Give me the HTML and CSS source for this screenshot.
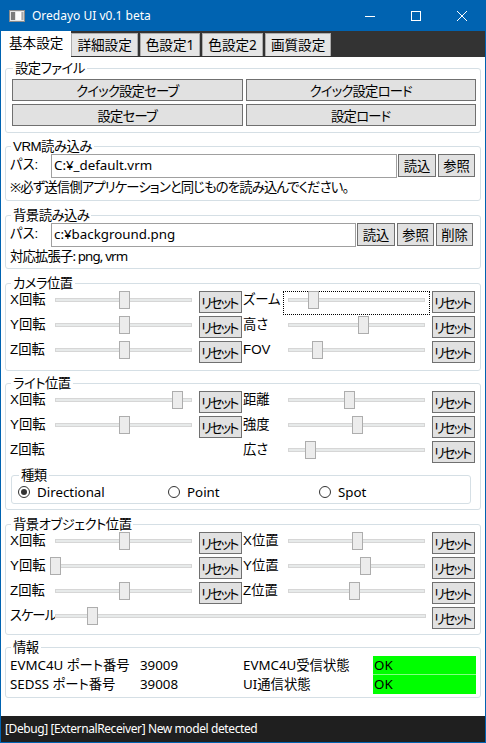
FILE: index.html
```html
<!DOCTYPE html>
<html lang="ja">
<head>
<meta charset="utf-8">
<title>Oredayo UI v0.1 beta</title>
<link rel="stylesheet" href="styles.css">
</head>
<body>
<div class="window">
  <header class="titlebar">
    <svg class="app-icon" width="16" height="12" viewBox="0 0 16 12">
      <rect x="0.5" y="0.5" width="15" height="11" fill="#e6e6e6" stroke="#8c8c8c"/>
      <rect x="2" y="2" width="4" height="8" fill="#7d7d7d"/>
      <rect x="7" y="2" width="5" height="8" fill="#ffffff"/>
      <rect x="12.5" y="2" width="2" height="8" fill="#a8a8a8"/>
    </svg>
    <span class="title">Oredayo UI v0.1 beta</span>
    <div class="caption">
      <span class="cap-btn"><svg width="10" height="10" viewBox="0 0 10 10"><line x1="0" y1="5.5" x2="10" y2="5.5" stroke="#fff" stroke-width="1"/></svg></span>
      <span class="cap-btn"><svg width="10" height="10" viewBox="0 0 10 10"><rect x="0.5" y="0.5" width="9" height="9" fill="none" stroke="#fff" stroke-width="1"/></svg></span>
      <span class="cap-btn"><svg width="10" height="10" viewBox="0 0 10 10"><path d="M0 0L10 10M10 0L0 10" stroke="#fff" stroke-width="1"/></svg></span>
    </div>
  </header>

  <nav class="tabs">
    <div class="tab active">基本設定</div>
    <div class="tab">詳細設定</div>
    <div class="tab">色設定1</div>
    <div class="tab">色設定2</div>
    <div class="tab">画質設定</div>
  </nav>

  <main class="content">
    <fieldset class="group g-file">
      <legend>設定ファイル</legend>
      <div class="btn-grid">
        <button class="btn">クイック設定セーブ</button>
        <button class="btn">クイック設定ロード</button>
        <button class="btn">設定セーブ</button>
        <button class="btn">設定ロード</button>
      </div>
    </fieldset>

    <fieldset class="group g-vrm">
      <legend>VRM読み込み</legend>
      <div class="path-row vrm">
        <span class="lbl">パス:</span>
        <div class="input">C:¥_default.vrm</div>
        <button class="btn sm">読込</button>
        <button class="btn sm">参照</button>
      </div>
      <div class="note">※必ず送信側アプリケーションと同じものを読み込んでください。</div>
    </fieldset>

    <fieldset class="group g-bg">
      <legend>背景読み込み</legend>
      <div class="path-row bg">
        <span class="lbl">パス:</span>
        <div class="input">c:¥background.png</div>
        <button class="btn sm">読込</button>
        <button class="btn sm">参照</button>
        <button class="btn sm">削除</button>
      </div>
      <div class="note">対応拡張子: png, vrm</div>
    </fieldset>

    <fieldset class="group g-cam">
      <legend>カメラ位置</legend>
      <div class="srow">
        <span class="lbl">X回転</span>
        <div class="slider"><div class="track"></div><div class="thumb" style="left:69px"></div></div>
        <button class="btn reset">リセット</button>
        <span class="lbl">ズーム</span>
        <div class="slider focus"><div class="track"></div><div class="thumb" style="left:25px"></div></div>
        <button class="btn reset">リセット</button>
      </div>
      <div class="srow">
        <span class="lbl">Y回転</span>
        <div class="slider"><div class="track"></div><div class="thumb" style="left:69px"></div></div>
        <button class="btn reset">リセット</button>
        <span class="lbl">高さ</span>
        <div class="slider"><div class="track"></div><div class="thumb" style="left:75px"></div></div>
        <button class="btn reset">リセット</button>
      </div>
      <div class="srow">
        <span class="lbl">Z回転</span>
        <div class="slider"><div class="track"></div><div class="thumb" style="left:69px"></div></div>
        <button class="btn reset">リセット</button>
        <span class="lbl">FOV</span>
        <div class="slider"><div class="track"></div><div class="thumb" style="left:29px"></div></div>
        <button class="btn reset">リセット</button>
      </div>
    </fieldset>

    <fieldset class="group g-light">
      <legend>ライト位置</legend>
      <div class="srow">
        <span class="lbl">X回転</span>
        <div class="slider"><div class="track"></div><div class="thumb" style="left:122px"></div></div>
        <button class="btn reset">リセット</button>
        <span class="lbl">距離</span>
        <div class="slider"><div class="track"></div><div class="thumb" style="left:61px"></div></div>
        <button class="btn reset">リセット</button>
      </div>
      <div class="srow">
        <span class="lbl">Y回転</span>
        <div class="slider"><div class="track"></div><div class="thumb" style="left:69px"></div></div>
        <button class="btn reset">リセット</button>
        <span class="lbl">強度</span>
        <div class="slider"><div class="track"></div><div class="thumb" style="left:69px"></div></div>
        <button class="btn reset">リセット</button>
      </div>
      <div class="srow">
        <span class="lbl">Z回転</span>
        <div></div>
        <div></div>
        <span class="lbl">広さ</span>
        <div class="slider"><div class="track"></div><div class="thumb" style="left:22px"></div></div>
        <button class="btn reset">リセット</button>
      </div>
      <fieldset class="group sub">
        <legend>種類</legend>
        <div class="radio-row">
          <label class="radio-item"><span class="radio checked"><span class="dot"></span></span>Directional</label>
          <label class="radio-item"><span class="radio"></span>Point</label>
          <label class="radio-item"><span class="radio"></span>Spot</label>
        </div>
      </fieldset>
    </fieldset>

    <fieldset class="group g-obj">
      <legend>背景オブジェクト位置</legend>
      <div class="srow">
        <span class="lbl">X回転</span>
        <div class="slider"><div class="track"></div><div class="thumb" style="left:69px"></div></div>
        <button class="btn reset">リセット</button>
        <span class="lbl">X位置</span>
        <div class="slider"><div class="track"></div><div class="thumb" style="left:69px"></div></div>
        <button class="btn reset">リセット</button>
      </div>
      <div class="srow">
        <span class="lbl">Y回転</span>
        <div class="slider"><div class="track"></div><div class="thumb" style="left:0px"></div></div>
        <button class="btn reset">リセット</button>
        <span class="lbl">Y位置</span>
        <div class="slider"><div class="track"></div><div class="thumb" style="left:77px"></div></div>
        <button class="btn reset">リセット</button>
      </div>
      <div class="srow">
        <span class="lbl">Z回転</span>
        <div class="slider"><div class="track"></div><div class="thumb" style="left:69px"></div></div>
        <button class="btn reset">リセット</button>
        <span class="lbl">Z位置</span>
        <div class="slider"><div class="track"></div><div class="thumb" style="left:66px"></div></div>
        <button class="btn reset">リセット</button>
      </div>
      <div class="srow">
        <span class="lbl tight">スケール</span>
        <div class="slider wide"><div class="track"></div><div class="thumb" style="left:37px"></div></div>
        <button class="btn reset">リセット</button>
      </div>
    </fieldset>

    <fieldset class="group g-info">
      <legend>情報</legend>
      <div class="info-row">
        <span>EVMC4U ポート番号</span>
        <span>39009</span>
        <span>EVMC4U受信状態</span>
        <span class="ok first">OK</span>
      </div>
      <div class="info-row">
        <span>SEDSS ポート番号</span>
        <span>39008</span>
        <span>UI通信状態</span>
        <span class="ok">OK</span>
      </div>
    </fieldset>
  </main>

  <footer class="status">[Debug] [ExternalReceiver] New model detected</footer>
</div>
</body>
</html>
```

FILE: styles.css
```css
* { box-sizing: border-box; }
html, body { margin: 0; padding: 0; }
body {
  font-family: "Noto Sans", "Noto Sans CJK JP", sans-serif;
  font-size: 13.333px;
  font-feature-settings: "palt";
  color: #000;
  background: #fff;
}

.window {
  width: 486px;
  height: 743px;
  display: flex;
  flex-direction: column;
  background: #0063b1;
  padding: 0 1px 1px 1px;
  overflow: hidden;
}

/* title bar */
.titlebar {
  flex: none;
  height: 31px;
  display: flex;
  align-items: center;
  color: #fff;
}
.app-icon { margin-left: 8px; flex: none; }
.title { margin-left: 7px; font-size: 12px; }
.caption { margin-left: auto; display: flex; height: 100%; }
.cap-btn { width: 46px; display: flex; align-items: center; justify-content: center; }

/* tabs */
.tabs {
  flex: none;
  height: 29px;
  display: flex;
  align-items: flex-start;
  background: linear-gradient(#333333 0 26px, #ffffff 26px);
}
.tab {
  height: 23px;
  margin-top: 2px;
  margin-left: 2px;
  padding: 0 5px;
  background: #e5e5e5;
  border: 1px solid #acacac;
  border-bottom: none;
  font-size: 13.6px;
  line-height: 21px;
  white-space: nowrap;
}
.tab.active {
  height: 29px;
  margin-top: 0;
  margin-left: 0;
  padding: 0 8px;
  background: #fff;
  border: none;
  line-height: 24px;
}
.tab.active + .tab { margin-left: 0; }

/* content */
.content {
  flex: 1;
  background: #fff;
  display: flex;
  flex-direction: column;
}

.group {
  margin: 0 4px;
  padding: 0 4px 4px 4px;
  border: 1px solid #d5dfe5;
  border-radius: 3px;
  min-width: 0;
}
.group legend {
  font-family: "Liberation Sans", "Noto Sans CJK JP", sans-serif;
  padding: 2px 2px 0 2px;
  margin-left: 1px;
  line-height: 14px;
  letter-spacing: -0.5px;
}

.g-file { padding: 3px 4px 6px 6px; }
.g-vrm { margin-top: 5px; padding-top: 0; padding-bottom: 4px; }
.g-bg { margin-top: 6px; padding-top: 0; padding-bottom: 3px; }
.g-cam { margin-top: 6px; padding-top: 0; padding-bottom: 4px; }
.g-light { margin-top: 4px; padding-top: 0; padding-bottom: 5px; }
.g-obj { margin-top: 6px; padding-top: 0; padding-bottom: 2px; }
.g-info { margin-top: 4px; padding-top: 1px; padding-bottom: 3px; }

.btn {
  font: inherit;
  font-feature-settings: "palt";
  letter-spacing: -0.8px;
  color: #000;
  background: #e1e1e1;
  border: 1px solid #707070;
  border-radius: 0;
  margin: 0;
  padding: 0;
  display: flex;
  align-items: center;
  justify-content: center;
  white-space: nowrap;
  overflow: hidden;
}

.btn-grid {
  display: grid;
  grid-template-columns: 1fr 1fr;
  grid-auto-rows: 22px;
  gap: 3px;
}

/* path rows */
.path-row {
  display: grid;
  height: 25px;
  align-items: start;
}
.path-row.vrm { grid-template-columns: 40px 346px 38px 38px; column-gap: 1px; }
.path-row.bg { grid-template-columns: 40px 305px 38px 38px 38px; column-gap: 1px; }
.path-row .btn + .btn { margin-left: 1px; width: 37px; }
.path-row .lbl { line-height: 22px; }
.input {
  height: 24px;
  border: 1px solid #a0a0a0;
  padding-left: 2px;
  line-height: 21px;
  white-space: nowrap;
  overflow: hidden;
}
.btn.sm { height: 23px; margin-top: 0; width: 38px; letter-spacing: 0; }
.note { line-height: 17px; height: 17px; white-space: nowrap; letter-spacing: -0.85px; }

/* slider rows */
.srow {
  display: grid;
  grid-template-columns: 40px 149px 44px 40px 149px 44px;
  height: 25px;
  align-items: start;
}
.lbl {
  font-family: "Liberation Sans", "Noto Sans CJK JP", sans-serif;
  line-height: 18px;
  white-space: nowrap;
}
.lbl.tight { letter-spacing: -1px; }
.slider {
  position: relative;
  width: 147px;
  height: 24px;
}
.slider.wide { grid-column: 2 / 6; width: 381px; }
.slider.focus { outline: 1px dotted #000; outline-offset: -1px; }
.track {
  position: absolute;
  left: 5px;
  right: 5px;
  top: 7px;
  height: 4px;
  background: #e7eaea;
  border: 1px solid #d6d6d6;
}
.thumb {
  position: absolute;
  top: 0;
  width: 11px;
  height: 18px;
  background: #ececec;
  border: 1px solid #adadad;
}
.btn.reset {
  width: 43px;
  height: 22px;
  justify-content: flex-start;
  padding-left: 1px;
  letter-spacing: -2px;
}
.srow > .btn.reset:last-child { grid-column: 6; }

/* sub group */
.group.sub {
  margin: 1px 5px 0 1px;
  padding: 0 4px 3px 6px;
}
.radio-row {
  display: grid;
  grid-template-columns: 150px 151px 1fr;
  height: 17px;
  align-items: center;
}
.radio-item { display: flex; align-items: center; gap: 7px; }
.radio {
  width: 12px;
  height: 12px;
  border: 1px solid #333;
  border-radius: 50%;
  display: flex;
  align-items: center;
  justify-content: center;
  background: #fff;
}
.radio .dot { width: 6px; height: 6px; border-radius: 50%; background: #333; }

/* info */
.info-row {
  display: grid;
  grid-template-columns: 130px 103px 130px 103px;
  height: 19px;
  line-height: 19px;
  white-space: nowrap;
}
.ok { background: #00ff00; padding-left: 1px; }
.ok.first { border-bottom: 1px solid #80ff80; line-height: 18px; }

/* status */
.status {
  flex: none;
  height: 26px;
  background: #1f1f1f;
  color: #fff;
  padding-left: 4px;
  font-size: 12px;
  letter-spacing: -0.4px;
  line-height: 26px;
  white-space: nowrap;
}
```
